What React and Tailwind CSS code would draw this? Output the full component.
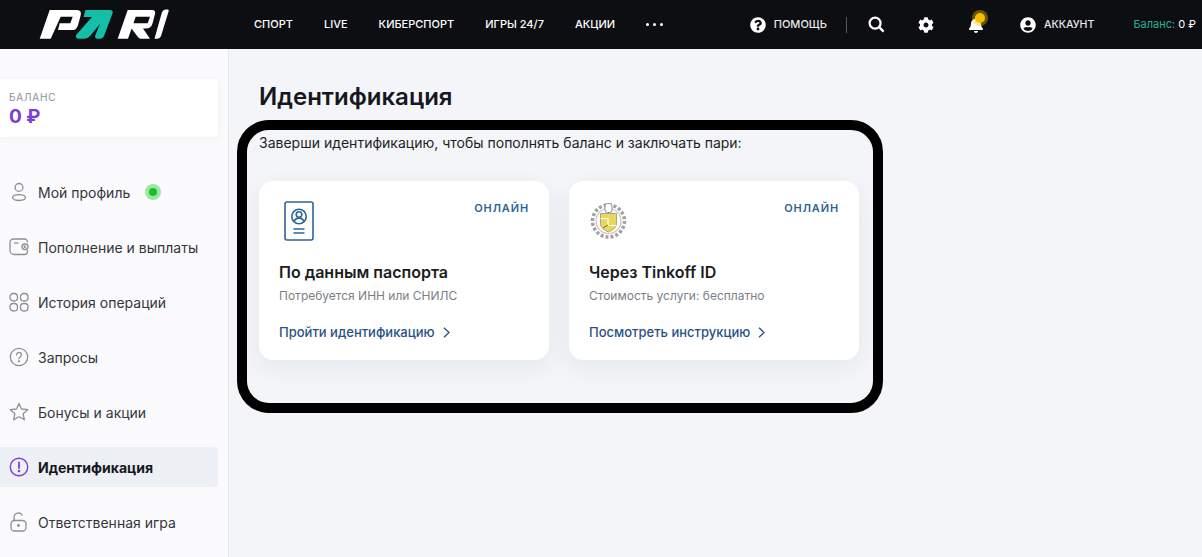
import React from "react";
import { FaQuestionCircle, FaCog, FaBell, FaUserCircle } from "react-icons/fa";

const navLinks = ["Спорт", "Live", "Киберспорт", "Игры 24/7", "Акции"];

// sidebar icons, all on a 20x20 box
const UserIcon = () => (
  <svg width="20" height="20" viewBox="0 0 20 20" fill="none" stroke="#8c9096" strokeWidth="1.3">
    <circle cx="10" cy="5.4" r="3.9" />
    <ellipse cx="10" cy="15.6" rx="6.4" ry="2.9" />
  </svg>
);

const WalletIcon = () => (
  <svg width="20" height="20" viewBox="0 0 20 20" fill="none" stroke="#8c9096" strokeWidth="1.3">
    <path d="M18.500 5.500V5a3 3 0 0 0-3-3H4.500a3.500 3.500 0 0 0-3.500 3.500v8A4 4 0 0 0 5 17.500h10.500a3 3 0 0 0 3-3V13" />
    <path d="M5 6h4.500" />
    <rect x="13" y="7" width="6" height="5.500" rx="2.700" />
    <circle cx="15.800" cy="9.800" r="0.600" fill="#8c9096" />
  </svg>
);

const GridIcon = () => (
  <svg width="20" height="20" viewBox="0 0 20 20" fill="none" stroke="#8c9096" strokeWidth="1.3">
    <rect x="1" y="1.500" width="7.500" height="7.500" rx="3.200" />
    <rect x="11.500" y="1.500" width="7.500" height="7.500" rx="3.200" />
    <rect x="1" y="11.500" width="7.500" height="7.500" rx="3.200" />
    <rect x="11.500" y="11.500" width="7.500" height="7.500" rx="3.200" />
  </svg>
);

const QuestionIcon = () => (
  <svg width="20" height="20" viewBox="0 0 20 20" fill="none" stroke="#8c9096" strokeWidth="1.3">
    <circle cx="10" cy="10" r="8.700" />
    <path d="M7.600 7.800a2.400 2.400 0 1 1 3.700 2c-.9.600-1.300 1-1.300 2" strokeLinecap="round" />
    <circle cx="10" cy="14.300" r="0.500" fill="#8c9096" />
  </svg>
);

const StarIcon = () => (
  <svg width="20" height="20" viewBox="0 0 20 20" fill="none" stroke="#8c9096" strokeWidth="1.3" strokeLinejoin="round">
    <path d="M10 1.400l2.500 5.600 6.200.7-4.600 4.100 1.300 6-5.400-3.100-5.400 3.100 1.300-6L1.300 7.700l6.200-.7z" />
  </svg>
);

const AlertIcon = () => (
  <svg width="20" height="20" viewBox="0 0 20 20" fill="none" stroke="#7c3fd1" strokeWidth="1.400">
    <circle cx="10" cy="10" r="8.700" />
    <path d="M10 5.500v5.500" strokeWidth="1.800" strokeLinecap="round" />
    <circle cx="10" cy="14" r="0.600" fill="#7c3fd1" />
  </svg>
);

const LockIcon = () => (
  <svg width="20" height="20" viewBox="0 0 20 20" fill="none" stroke="#8c9096" strokeWidth="1.3">
    <rect x="2" y="8.500" width="15" height="10.500" rx="3.500" />
    <path d="M5 8.500V5.500a4.500 4.500 0 0 1 8.500-2" />
    <circle cx="9.500" cy="13.500" r="0.800" fill="#8c9096" />
  </svg>
);

const menu = [
  { label: "Мой профиль", icon: <UserIcon />, dot: true },
  { label: "Пополнение и выплаты", icon: <WalletIcon /> },
  { label: "История операций", icon: <GridIcon /> },
  { label: "Запросы", icon: <QuestionIcon /> },
  { label: "Бонусы и акции", icon: <StarIcon /> },
  { label: "Идентификация", icon: <AlertIcon />, active: true },
  { label: "Ответственная игра", icon: <LockIcon /> },
];

// viewBox is in page coordinates, so the points can be read off the screenshot
const Logo = () => (
  <svg width="131" height="31" viewBox="39 9 131 31">
    <path
      d="M39.700 38.700 49.700 10H76.300Q82 10 80.700 15.300L78 25.300Q76.500 30 73 30H58L59.700 23.300H70.300L72.700 16.700H60.700L50.700 38.700Z"
      fill="#ffffff"
    />
    <path
      d="M85.500 10H110Q113.500 10 112.500 13.500L104 36Q103 38.700 100.500 38.700H97.500Q94.500 38.700 95.200 35.500L100 24 90.500 35.500Q88 38.700 84.500 38.700H78Q74.500 37.500 76.500 34.500L92 17H83.500Z"
      fill="#13bfa6"
    />
    <path
      d="M117.700 38.700 127.700 10H152Q156 10 155 14L152.500 23.500Q151 28.500 146 28.500H143L150 38.700H141Q139 38.700 137.500 36.500L131.500 28.500 133.300 23.300H147.700L150 16.700H135.700L128 38.700Z"
      fill="#ffffff"
    />
    <path
      d="M154.500 38.700 162 12Q163 9.500 165.500 9.500H168Q169 9.500 168.700 11L161 36Q160 38.700 157.500 38.700Z"
      fill="#ffffff"
    />
  </svg>
);

const PassportIcon = () => (
  <svg width="30" height="40" viewBox="0 0 30 40" fill="none" stroke="#2f6496" strokeWidth="1.600" className="ml-[5px]">
    <rect x="1" y="1" width="28" height="38" rx="2" />
    <circle cx="15" cy="15.500" r="7.200" />
    <circle cx="15" cy="13.500" r="2.800" />
    <path d="M10 20.500c1-2.500 2.800-3.400 5-3.400s4 .9 5 3.400" />
    <path d="M9.500 28h11M9.500 32h11" />
  </svg>
);

// rough version of the bank crest, it is tiny on the card
const TinkoffIcon = () => (
  <svg width="40" height="40" viewBox="0 0 40 40">
    <circle cx="19.500" cy="20" r="16" fill="none" stroke="#a3a39d" strokeWidth="3.500" strokeDasharray="3 2" />
    <circle cx="19.500" cy="20" r="12.500" fill="none" stroke="#c4c4be" strokeWidth="1.200" />
    <rect x="16" y="2.500" width="7" height="9" rx="2.500" fill="#ffffff" stroke="#8f8f88" strokeWidth="1" />
    <path d="M11.500 12.500h16v10c0 4.500-4 6.500-8 8.500-4-2-8-4-8-8.500z" fill="#e9d85c" stroke="#85847a" strokeWidth="0.700" />
    <path d="M11.500 17.500h7.500v7h8.500" fill="none" stroke="#ffffff" strokeWidth="1.200" />
    <path d="M14 27l5-3" fill="none" stroke="#77733f" strokeWidth="1" />
  </svg>
);

const Chevron = () => (
  <svg width="7" height="11" viewBox="0 0 7 11" fill="none" stroke="#2a5183" strokeWidth="1.300" className="ml-[8px]">
    <path d="M1 .8 6 5.500 1 10.200" />
  </svg>
);

const Card = ({ icon, title, text, link }) => (
  <div className="w-[290px] h-[179px] bg-white rounded-[14px] shadow-[0_8px_24px_rgba(40,60,90,0.07)] px-[20px]">
    <div className="h-[80px] flex justify-between items-start">
      <div className="mt-[20px]">{icon}</div>
      <span className="mt-[20px] text-[11px] leading-[14px] font-semibold tracking-[0.08em] text-[#2f6496]">ОНЛАЙН</span>
    </div>
    <div className="mt-[1px] text-[16px] leading-[20px] font-semibold text-[#1b1c20]">{title}</div>
    <div className="mt-[6px] text-[12px] leading-[16px] text-[#7b7f86]">{text}</div>
    <div className="mt-[19px] flex items-center text-[13px] leading-[18px] font-medium text-[#2a5183]">
      {link}
      <Chevron />
    </div>
  </div>
);

export default function App() {
  return (
    <div className="h-screen flex flex-col overflow-hidden bg-[#f3f5f8] font-['Inter',sans-serif]">
      {/* Top bar */}
      <header className="h-[49px] shrink-0 bg-[#0d0e12] flex items-center text-white">
        <div className="ml-[39px] w-[215px] flex">
          <Logo />
        </div>
        <nav className="flex items-center gap-[31px] text-[11px] font-medium uppercase">
          {navLinks.map((link) => (
            <span key={link}>{link}</span>
          ))}
          <span className="flex gap-[4px]">
            <i className="w-[3px] h-[3px] rounded-full bg-white" />
            <i className="w-[3px] h-[3px] rounded-full bg-white" />
            <i className="w-[3px] h-[3px] rounded-full bg-white" />
          </span>
        </nav>
        <div className="ml-auto flex items-center text-[11px] font-medium uppercase">
          <FaQuestionCircle size={16} />
          <span className="ml-[8px] text-[#e8e8e8]">Помощь</span>
          <span className="ml-[19px] w-px h-[16px] bg-[#55575b]" />
          <svg width="17" height="17" viewBox="0 0 18 18" fill="none" stroke="#fff" strokeWidth="2.400" className="ml-[21px]">
            <circle cx="7.500" cy="7.500" r="5.800" />
            <path d="M11.800 11.800 16.500 16.500" />
          </svg>
          <FaCog size={16} className="ml-[33px]" />
          <span className="ml-[34px] relative w-[16px] h-[16px]">
            <FaBell size={16} />
            <i className="absolute -top-[7px] left-[4px] w-[16px] h-[16px] rounded-full bg-[#f5bd00]/40" />
            <i className="absolute -top-[4px] left-[7px] w-[10px] h-[10px] rounded-full bg-[#f5bd00]" />
          </span>
          <FaUserCircle size={16} className="ml-[36px]" />
          <span className="ml-[8px] text-[10.6px] text-[#e8e8e8]">Аккаунт</span>
          <span className="ml-[39px] mr-[6px] text-[11px] font-normal normal-case">
            <span className="text-[#27b194]">Баланс:</span> 0 ₽
          </span>
        </div>
      </header>

      <div className="flex-1 flex min-h-0">
        {/* Sidebar */}
        <aside className="w-[229px] shrink-0 bg-[#fbfbfd] border-r border-[#e6e8ec] pt-[30px]">
          <div className="w-[218px] h-[58px] bg-white rounded-r-[4px] shadow-[0_2px_8px_rgba(40,60,90,0.06)] pl-[9px] pt-[12px]">
            <div className="text-[10px] leading-[12px] tracking-[0.08em] text-[#8c9096]">БАЛАНС</div>
            <div className="mt-[3px] text-[19px] leading-[22px] font-bold text-[#7c3fd1]">0 ₽</div>
          </div>
          <ul className="mt-[35px] flex flex-col gap-[15px]">
            {menu.map((item) => (
              <li
                key={item.label}
                className={`w-[218px] h-[40px] pl-[9px] flex items-center rounded-r-[4px] text-[14px] ${
                  item.active ? "bg-[#edf0f5] font-bold text-[#16181d]" : "text-[#33363c]"
                }`}
              >
                <span className="w-[20px] flex justify-center">{item.icon}</span>
                <span className="ml-[9px]">{item.label}</span>
                {item.dot && (
                  <span className="ml-[15px] w-[16px] h-[16px] rounded-full bg-[#9be8a2] flex items-center justify-center">
                    <i className="w-[8px] h-[8px] rounded-full bg-[#16c02f]" />
                  </span>
                )}
              </li>
            ))}
          </ul>
        </aside>

        {/* Content */}
        <main className="flex-1 pl-[8px]">
          <h1 className="ml-[22px] mt-[32px] text-[24px] leading-[32px] font-semibold text-[#16181d]">Идентификация</h1>
          <section className="mt-[7px] w-[646px] h-[293px] border-[10px] border-black rounded-[32px] pl-[12px]">
            <p className="text-[14px] leading-[20px] mt-[3px] text-[#1d1f24]">
              Заверши идентификацию, чтобы пополнять баланс и заключать пари:
            </p>
            <div className="mt-[28px] flex gap-[20px]">
              <Card
                icon={<PassportIcon />}
                title="По данным паспорта"
                text="Потребуется ИНН или СНИЛС"
                link="Пройти идентификацию"
              />
              <Card
                icon={<TinkoffIcon />}
                title="Через Tinkoff ID"
                text="Стоимость услуги: бесплатно"
                link="Посмотреть инструкцию"
              />
            </div>
          </section>
        </main>
      </div>
    </div>
  );
}
